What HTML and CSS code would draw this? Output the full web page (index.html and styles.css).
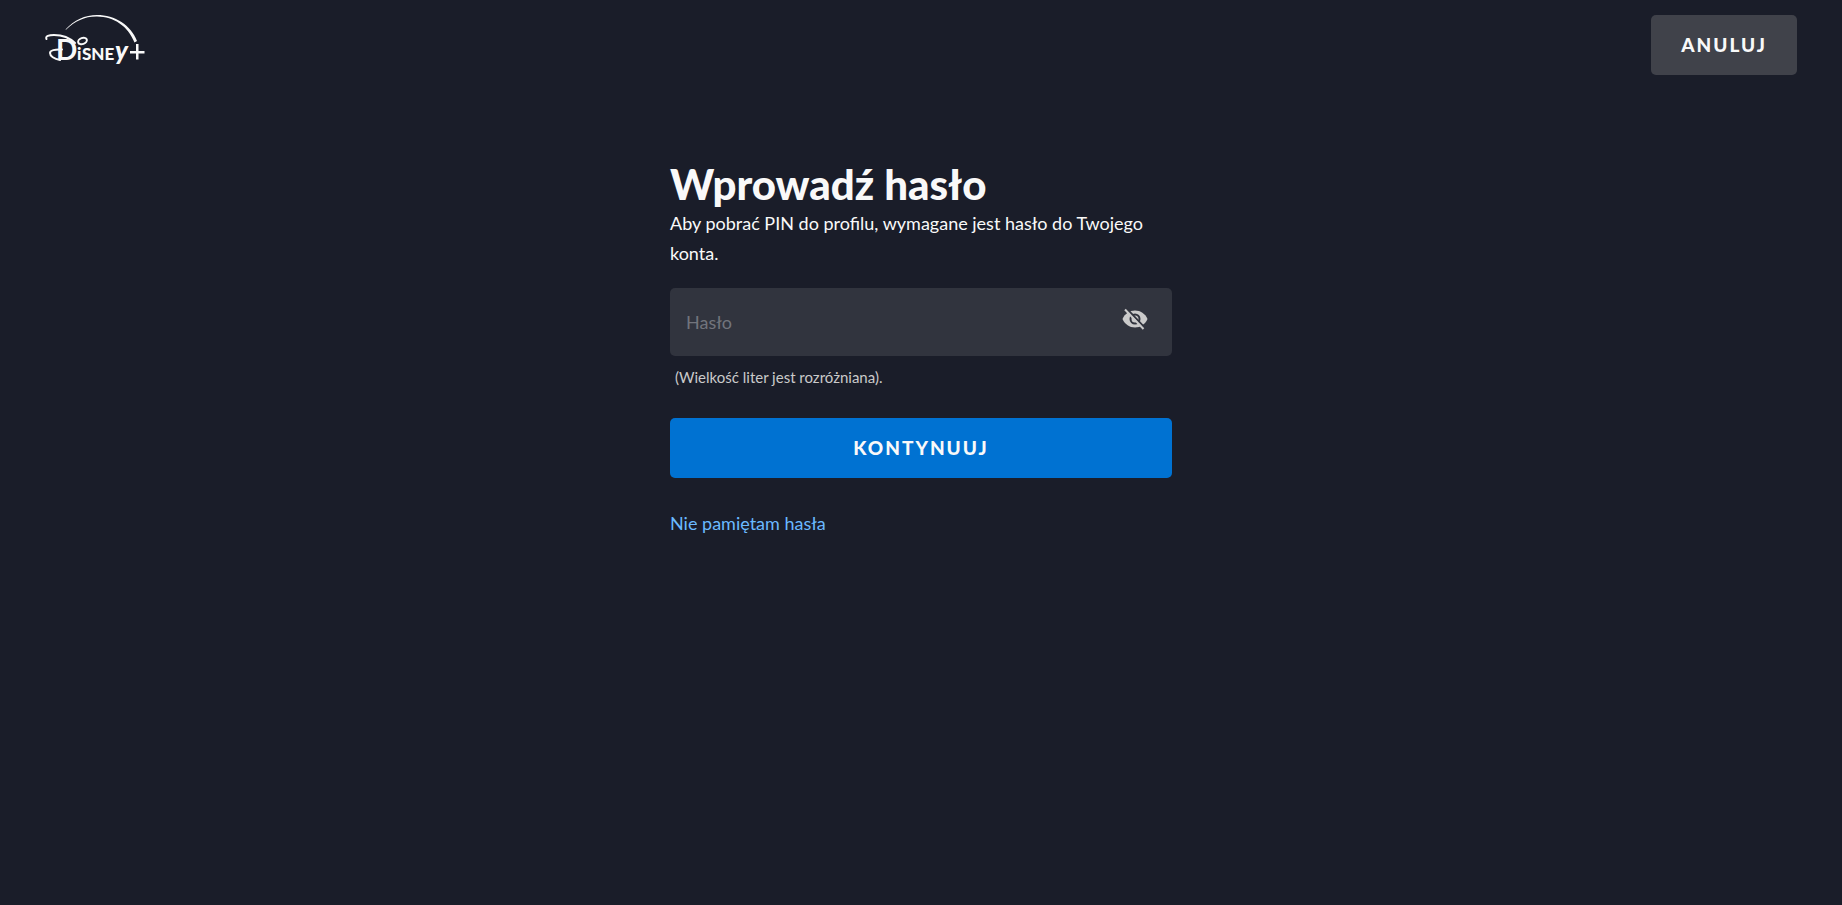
FILE: index.html
```html
<!DOCTYPE html>
<html lang="pl">
  <head>
    <meta charset="UTF-8" />
    <meta name="viewport" content="width=device-width, initial-scale=1.0" />
    <title>Disney+</title>
    <link rel="stylesheet" href="styles.css" />
  </head>
  <body>
    <header class="header">
      <svg class="logo" viewBox="0 0 100 56" role="img" aria-label="Disney+">
        <!-- arc -->
        <path d="M20.500 14.500C29 5 40 0 52 0C70 0 86 10 92 26L89.500 27.500C83 11 69 1.800 52 1.500C40 1.300 30 6 21 14.800Z" />
        <!-- flourish around the first letter -->
        <path class="stroke" d="M1.500 24C0 21 4 20 9 20C17 20 25 23 30 28" />
        <path class="stroke" d="M17 34.500C10 34 5 35.500 5 38C5 41 9 44 15 45" />
        <ellipse class="stroke" cx="37.500" cy="26" rx="4.500" ry="3" transform="rotate(-20 37.500 26)" />
        <text class="logo-text" y="45"><tspan class="logo-initial" x="11">D</tspan><tspan x="32">i</tspan><tspan class="logo-caps" x="37">sne</tspan><tspan class="logo-tail" x="70">y</tspan></text>
        <!-- plus -->
        <path d="M85 36H91V29H93.500V36H99.500V38.500H93.500V44.500H91V38.500H85Z" />
      </svg>
      <button class="button button-cancel" type="button">ANULUJ</button>
    </header>

    <main class="content">
      <form class="password-form">
        <h1>Wprowadź hasło</h1>
        <p class="description">Aby pobrać PIN do profilu, wymagane jest hasło do Twojego konta.</p>
        <div class="field">
          <input type="password" id="password" placeholder="Hasło" aria-label="Hasło" aria-describedby="password-hint" />
          <button class="toggle" type="button" id="toggle-password" aria-label="Pokaż hasło">
            <svg class="eye" viewBox="0 0 26 22">
              <path class="eye-shape" d="M0.500 11C3 5.500 7.500 2.500 13 2.500S23 5.500 25.500 11C23 16.500 18.500 19.500 13 19.500S3 16.500 0.500 11Z" />
              <circle class="eye-ring" cx="13" cy="11" r="4.500" />
              <path class="eye-gap" d="M5 1L23 20" />
              <path class="eye-slash" d="M3 1.500L21.500 21" />
            </svg>
          </button>
        </div>
        <p class="hint" id="password-hint">(Wielkość liter jest rozróżniana).</p>
        <button class="button button-continue" type="submit">KONTYNUUJ</button>
        <a class="forgot" href="#">Nie pamiętam hasła</a>
      </form>
    </main>
  </body>
</html>
```
FILE: styles.css
```css
* {
  box-sizing: border-box;
}

body {
  margin: 0;
  min-height: 100vh;
  background-color: #1a1d29;
  color: #f9f9f9;
  font-family: Lato, "Open Sans", sans-serif;
  font-size: 18px;
  line-height: 30px;
}

.header {
  display: flex;
  justify-content: space-between;
  align-items: flex-start;
  padding: 15px 45px;
}

.logo {
  width: 100px;
  height: 56px;
  fill: #f9f9f9;
  overflow: visible;
}

.logo .stroke {
  fill: none;
  stroke: #f9f9f9;
  stroke-width: 2;
  stroke-linecap: round;
}

.logo-text {
  font-size: 17px;
  font-weight: 900;
}

.logo-initial {
  font-size: 28px;
  font-weight: 700;
}

.logo-caps {
  text-transform: uppercase;
}

.logo-tail {
  font-size: 26px;
  font-style: italic;
}

.button {
  height: 60px;
  padding: 0 30px 2px;
  border: none;
  border-radius: 5px;
  color: #f9f9f9;
  font-family: inherit;
  font-size: 19px;
  font-weight: 900;
  letter-spacing: 2px;
  cursor: pointer;
}

.button-cancel {
  background-color: #40424a;
}

.button-cancel:hover {
  background-color: #54565e;
}

.content {
  display: flex;
  justify-content: center;
  padding: 70px 20px;
}

.password-form {
  display: flex;
  flex-direction: column;
  width: 100%;
  max-width: 502px;
}

h1 {
  margin: 0;
  font-size: 42px;
  font-weight: 900;
  line-height: 48px;
}

.description {
  margin: 0 0 20px;
}

.field {
  display: flex;
  align-items: center;
  height: 68px;
  padding: 0 24px 0 16px;
  border-radius: 5px;
  background-color: #31343e;
}

.field input {
  flex: 1;
  min-width: 0;
  height: 100%;
  padding: 0;
  border: none;
  outline: none;
  background: none;
  color: #f9f9f9;
  font-family: inherit;
  font-size: 18px;
}

.field input::placeholder {
  color: #72747c;
  opacity: 1;
}

.toggle {
  padding: 0 0 6px;
  border: none;
  background: none;
  cursor: pointer;
}

.eye {
  display: block;
  width: 26px;
  height: 22px;
  fill: none;
  stroke-width: 2;
}

.eye .eye-shape {
  fill: #cacaca;
}

.eye-ring,
.eye-gap {
  stroke: #31343e;
}

.eye-slash {
  stroke: #cacaca;
}

.hint {
  margin: 10px 5px 30px;
  color: #cacaca;
  font-size: 15px;
  line-height: 22px;
}

.button-continue {
  background-color: #0072d2;
}

.button-continue:hover {
  background-color: #0485ee;
}

.forgot {
  align-self: flex-start;
  margin-top: 30px;
  color: #6ab9ff;
  text-decoration: none;
}
```
